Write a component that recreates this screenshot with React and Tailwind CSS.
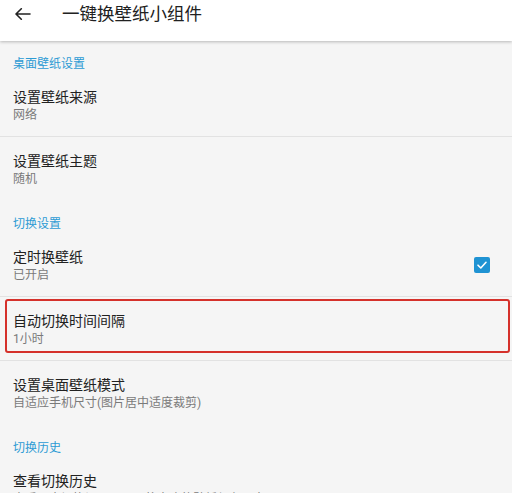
import React from "react";

const font = { fontFamily: '"Roboto", "Noto Sans CJK SC", sans-serif' };

function Category({ children }) {
  return (
    <div className="h-8 pt-[15px] pl-[13px] text-[12px] leading-4 text-[#2d9bd4]">
      {children}
    </div>
  );
}

function Item({ title, sub, divider, checked, highlight }) {
  return (
    <div
      className={
        "relative h-16 pl-[13px] pr-[22px] flex items-center " +
        (divider ? "border-b border-[#e2e2e2]" : "")
      }
    >
      <div className="flex-1 flex flex-col pt-[0px]">
        <div className="text-[14px] leading-5 text-[#212121]">{title}</div>
        <div className="text-[12px] leading-4 text-[#7a7a7a]">{sub}</div>
      </div>
      {checked && (
        <div className="w-4 h-4 rounded-[2px] bg-[#1f93d3] flex items-center justify-center">
          <svg width="12" height="12" viewBox="0 0 12 12" fill="none">
            <path d="M2 6.2 L4.8 9 L10 3.3" stroke="white" strokeWidth="1.6" strokeLinecap="round" strokeLinejoin="round" />
          </svg>
        </div>
      )}
      {highlight && (
        <div className="absolute left-[5px] right-[2px] top-[2px] h-[54px] border-2 border-[#d5312b] rounded-[3px] pointer-events-none" />
      )}
    </div>
  );
}

export default function App() {
  return (
    <div className="w-[512px] h-[493px] overflow-hidden bg-[#f5f5f5]" style={font}>
      <div className="relative z-10 h-[41px] bg-white shadow-[0_1px_3px_rgba(0,0,0,0.25)]">
        <div className="h-[28px] flex items-center">
          <div className="w-[62px] pl-[15px] flex items-center">
            <svg width="16" height="12" viewBox="0 0 16 12" fill="none">
              <path d="M15 6 H1.2 M6.3 0.8 L1 6 L6.3 11.2" stroke="#222" strokeWidth="1.6" strokeLinecap="round" strokeLinejoin="round" />
            </svg>
          </div>
          <div className="text-[17.5px] leading-[28px] text-[#212121]">一键换壁纸小组件</div>
        </div>
      </div>
      <Category>桌面壁纸设置</Category>
      <Item title="设置壁纸来源" sub="网络" divider />
      <Item title="设置壁纸主题" sub="随机" />
      <Category>切换设置</Category>
      <Item title="定时换壁纸" sub="已开启" divider checked />
      <Item title="自动切换时间间隔" sub="1小时" divider highlight />
      <Item title="设置桌面壁纸模式" sub="自适应手机尺寸(图片居中适度裁剪)" />
      <Category>切换历史</Category>
      <Item title="查看切换历史" sub="查看历史切换记录，可以将喜欢的壁纸保存下来" />
    </div>
  );
}
